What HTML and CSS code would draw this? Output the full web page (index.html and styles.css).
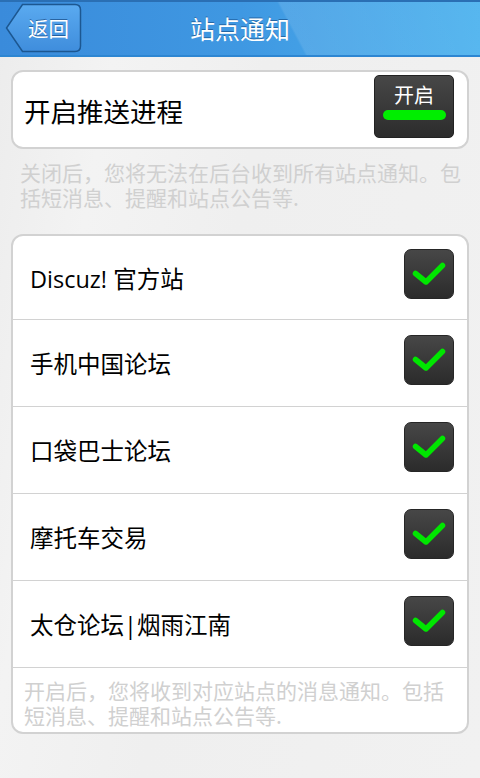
FILE: index.html
```html
<!DOCTYPE html>
<html lang="zh-CN">
<head>
<meta charset="utf-8">
<title>站点通知</title>
<link rel="stylesheet" href="styles.css">
</head>
<body>
<header class="topbar">
  <div class="left">
    <a class="back" href="#">
      <svg class="back-bg" width="77" height="50" viewBox="0 0 77 50">
        <defs>
          <linearGradient id="bg" x1="0" y1="0" x2="0" y2="1">
            <stop offset="0" stop-color="#5aaaf0"/>
            <stop offset="1" stop-color="#3f8ddc"/>
          </linearGradient>
        </defs>
        <path d="M17.5 1.5 H70 Q75.5 1.5 75.5 7 V43 Q75.5 48.5 70 48.5 H17.5 L1.5 25 Z" fill="url(#bg)" stroke="#1c5791" stroke-width="1.5"/>
      </svg>
      <span class="back-text">返回</span>
    </a>
  </div>
  <h1 class="title">站点通知</h1>
  <div class="right"></div>
</header>

<main class="content">
  <section class="card push">
    <span class="push-label">开启推送进程</span>
    <button class="toggle" type="button">
      <span class="toggle-text">开启</span>
      <span class="toggle-bar"></span>
    </button>
  </section>
  <p class="desc">关闭后，您将无法在后台收到所有站点通知。包括短消息、提醒和站点公告等.</p>

  <section class="card list">
    <div class="row"><span class="row-label">Discuz! 官方站</span><span class="check"><svg viewBox="0 0 50 50" width="50" height="50"><polyline points="11.5,24.5 22,33 38.5,16.5" fill="none" stroke="#00e600" stroke-width="5.5" stroke-linecap="round" stroke-linejoin="round"/></svg></span></div>
    <div class="row"><span class="row-label">手机中国论坛</span><span class="check"><svg viewBox="0 0 50 50" width="50" height="50"><polyline points="11.5,24.5 22,33 38.5,16.5" fill="none" stroke="#00e600" stroke-width="5.5" stroke-linecap="round" stroke-linejoin="round"/></svg></span></div>
    <div class="row"><span class="row-label">口袋巴士论坛</span><span class="check"><svg viewBox="0 0 50 50" width="50" height="50"><polyline points="11.5,24.5 22,33 38.5,16.5" fill="none" stroke="#00e600" stroke-width="5.5" stroke-linecap="round" stroke-linejoin="round"/></svg></span></div>
    <div class="row"><span class="row-label">摩托车交易</span><span class="check"><svg viewBox="0 0 50 50" width="50" height="50"><polyline points="11.5,24.5 22,33 38.5,16.5" fill="none" stroke="#00e600" stroke-width="5.5" stroke-linecap="round" stroke-linejoin="round"/></svg></span></div>
    <div class="row"><span class="row-label">太仓论坛|烟雨江南</span><span class="check"><svg viewBox="0 0 50 50" width="50" height="50"><polyline points="11.5,24.5 22,33 38.5,16.5" fill="none" stroke="#00e600" stroke-width="5.5" stroke-linecap="round" stroke-linejoin="round"/></svg></span></div>
    <p class="list-desc">开启后，您将收到对应站点的消息通知。包括短消息、提醒和站点公告等.</p>
  </section>
</main>
</body>
</html>
```
FILE: styles.css
```css
* { box-sizing: border-box; }

html, body {
  margin: 0;
  padding: 0;
}

body {
  width: 480px;
  height: 778px;
  overflow: hidden;
  font-family: "Open Sans", "Noto Sans CJK SC", sans-serif;
  background: linear-gradient(100deg, #ececec 0%, #f3f3f3 20%, #efefef 45%, #f1f1f1 100%);
  color: #000;
}

.topbar {
  height: 57px;
  display: grid;
  grid-template-columns: 1fr auto 1fr;
  align-items: center;
  border-top: 2px solid #2a6fb4;
  border-bottom: 2px solid #2d86d2;
  background:
    linear-gradient(62deg, rgba(255,255,255,0) 0%, rgba(255,255,255,0) 60%, rgba(255,255,255,0.10) 60.5%, rgba(255,255,255,0.06) 100%),
    linear-gradient(90deg, #3a8bdb 0%, #3f98e2 50%, #4cb2ee 100%);
}

.left {
  display: flex;
  align-items: center;
  padding-left: 5px;
}

.back {
  position: relative;
  display: flex;
  align-items: center;
  justify-content: center;
  width: 77px;
  height: 50px;
  margin-top: -2px;
  text-decoration: none;
}

.back-bg {
  position: absolute;
  left: 0;
  top: 0;
}

.back-text {
  position: relative;
  padding-left: 10px;
  font-family: "Noto Sans CJK SC", sans-serif;
  font-size: 20.5px;
  color: #fff;
  text-shadow: 0 -1px 0 rgba(0,40,90,0.5);
}

.title {
  margin: 0;
  font-family: "Noto Sans CJK SC", sans-serif;
  font-size: 25px;
  font-weight: normal;
  color: #fff;
  margin-top: -2px;
  text-shadow: 0 -1px 0 rgba(0,40,90,0.45);
}

.content {
  padding: 13px 11px 0 11px;
}

.card {
  background: #fff;
  border: 2px solid #d2d2d2;
  border-radius: 12px;
}

.push {
  height: 79px;
  display: flex;
  align-items: center;
  justify-content: space-between;
  padding: 0 12px 0 11px;
}

.push-label {
  font-family: "Noto Sans CJK SC", sans-serif;
  font-size: 26.5px;
  margin-top: 2px;
}

.toggle {
  width: 80px;
  height: 63px;
  margin-top: -6px;
  margin-right: 1px;
  border: 1px solid #222;
  border-radius: 5px;
  background: linear-gradient(#474747, #2c2c2c);
  display: flex;
  flex-direction: column;
  align-items: center;
  padding: 6px 0 0 0;
  gap: 2px;
}

.toggle-text {
  font-family: "Noto Sans CJK SC", sans-serif;
  font-size: 20px;
  line-height: 26px;
  color: #fff;
}

.toggle-bar {
  width: 63px;
  height: 10px;
  border-radius: 5px;
  background: #00ee00;
}

.desc {
  margin: 11px 0 0 0;
  padding: 0 7px 0 9px;
  font-family: "Noto Sans CJK SC", sans-serif;
  font-size: 21px;
  line-height: 25px;
  color: #d0d0d0;
}

.list {
  margin-top: 24px;
  overflow: hidden;
}

.row {
  height: 87px;
  display: flex;
  align-items: center;
  justify-content: space-between;
  border-bottom: 1px solid #d2d2d2;
  padding: 0 13px 0 17px;
}

.row:first-child {
  height: 84px;
}

.row-label {
  font-family: "Open Sans", "Noto Sans CJK SC", sans-serif;
  font-size: 23.5px;
}

.check {
  width: 50px;
  height: 50px;
  margin-top: -7px;
  border: 1px solid #262626;
  border-radius: 7px;
  background: linear-gradient(#474747, #2b2b2b);
  display: flex;
}

.check svg {
  display: block;
  margin: -1px;
}

.list-desc {
  margin: 0;
  padding: 10px 14px 4px 11px;
  font-family: "Noto Sans CJK SC", sans-serif;
  font-size: 21px;
  line-height: 25px;
  color: #d0d0d0;
}
```
